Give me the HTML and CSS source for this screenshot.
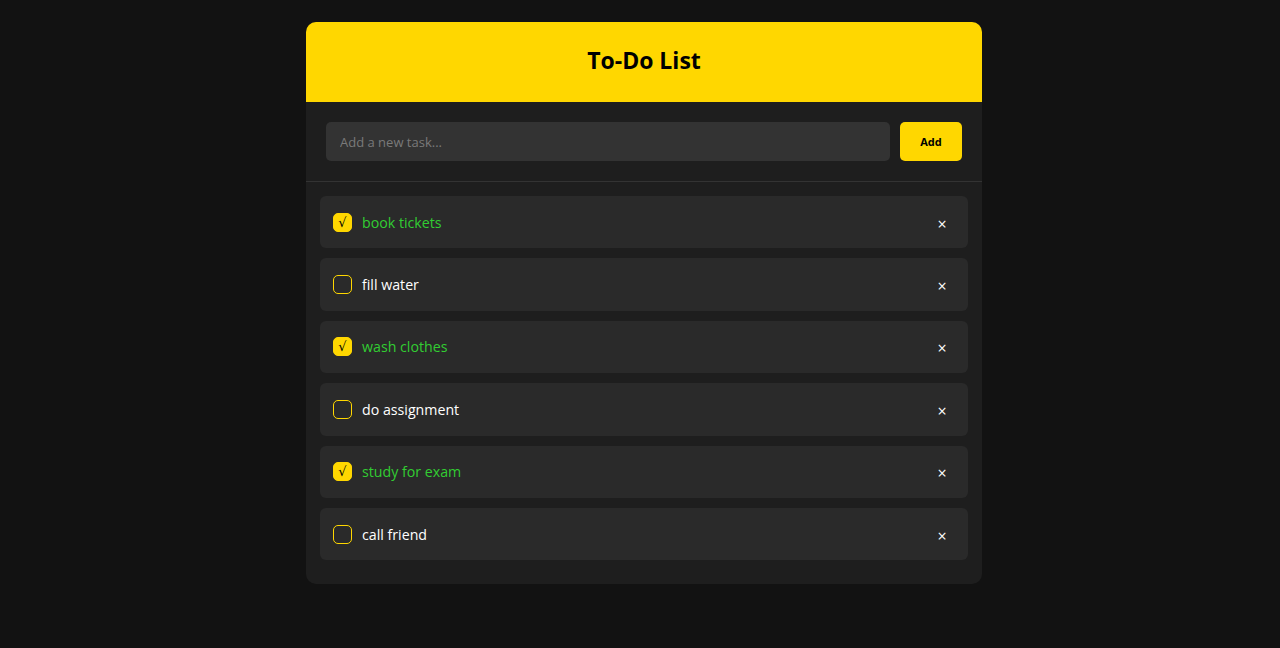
FILE: index.html
```html
<!DOCTYPE html>
<html>
<head>
<meta charset="utf-8">
<link rel="stylesheet" href="styles.css">
</head>
<body>
<div class="card">
  <div class="header"><h1>To-Do List</h1></div>
  <div class="add-row">
    <input class="task-input" type="text" placeholder="Add a new task...">
    <button class="add-btn">Add</button>
  </div>
  <ul class="list">
    <li class="item done"><span class="box">√</span><span class="text">book tickets</span><span class="del">×</span></li>
    <li class="item"><span class="box"></span><span class="text">fill water</span><span class="del">×</span></li>
    <li class="item done"><span class="box">√</span><span class="text">wash clothes</span><span class="del">×</span></li>
    <li class="item"><span class="box"></span><span class="text">do assignment</span><span class="del">×</span></li>
    <li class="item done"><span class="box">√</span><span class="text">study for exam</span><span class="del">×</span></li>
    <li class="item"><span class="box"></span><span class="text">call friend</span><span class="del">×</span></li>
  </ul>
</div>
</body>
</html>
```
FILE: styles.css
```css
* { box-sizing: border-box; }
body {
  margin: 0;
  padding-left: 8px;
  background: #121212;
  font-family: "Segoe UI", "Open Sans", "Noto Sans", sans-serif;
  color: #fff;
}
.card {
  width: 676px;
  margin: 22px auto 0;
  background: #1e1e1e;
  border-radius: 10px;
  overflow: hidden;
}
.header {
  background: #ffd700;
  height: 80px;
  display: flex;
  align-items: center;
  justify-content: center;
  padding-bottom: 4px;
}
.header h1 {
  margin: 0;
  color: #000;
  font-size: 23px;
  font-weight: 700;
}
.add-row {
  display: flex;
  gap: 10px;
  padding: 20px;
  border-bottom: 1px solid #333;
}
.task-input {
  flex: 1;
  height: 39px;
  background: #333;
  border: none;
  border-radius: 5px;
  padding: 0 14px;
  color: #fff;
  font-family: inherit;
  font-size: 13px;
  outline: none;
}
.task-input::placeholder { color: #7a7a7a; }
.add-btn {
  width: 62px;
  height: 39px;
  background: #ffd700;
  border: none;
  border-radius: 5px;
  color: #000;
  font-family: inherit;
  font-size: 11px;
  font-weight: 700;
}
.list {
  list-style: none;
  margin: 0;
  padding: 14px 14px 14px;
}
.item {
  display: flex;
  align-items: center;
  height: 52.4px;
  background: #2a2a2a;
  border-radius: 6px;
  padding: 0 20px 0 13px;
  margin-bottom: 10px;
}
.box {
  width: 19px;
  height: 19px;
  border: 1.6px solid #ffd700;
  border-radius: 5px;
  margin-right: 10px;
  display: flex;
  align-items: center;
  justify-content: center;
  font-family: "DejaVu Sans", sans-serif;
  font-size: 13px;
  color: #000;
  line-height: 1;
}
.done .box { background: #ffd700; }
.text {
  flex: 1;
  font-size: 14.2px;
  color: #fff;
}
.done .text { color: #32cd32; }
.del {
  font-size: 16px;
  color: #fff;
  width: 12px;
  text-align: center;
  padding-top: 3px;
}
```
